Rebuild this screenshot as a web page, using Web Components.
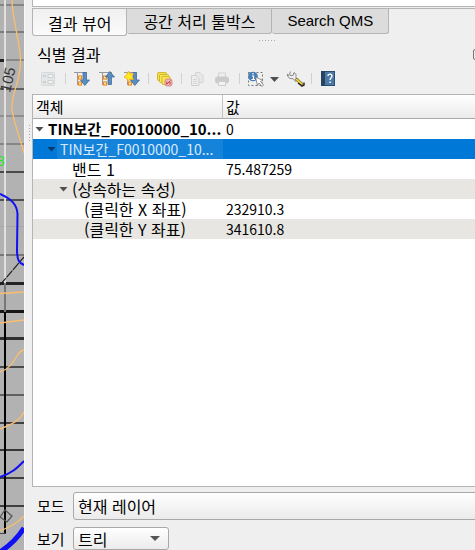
<!DOCTYPE html>
<html lang="ko">
<head>
<meta charset="utf-8">
<meta name="viewport" content="width=device-width, initial-scale=1">
<title>식별 결과</title>
<style>
    html, body {
        margin: 0;
        height: 100%;
    }
    body {
        font-family: "Noto Sans CJK KR", sans-serif;
        font-size: 16px;
        line-height: 20px;
        color: #000;
        background: #efefef;
        overflow: hidden;
    }
</style>
</head>
<body>
<gis-window>
    <map-strip slot="map"></map-strip>
    <dock-tabs slot="dock">
        <dock-tab active>결과 뷰어</dock-tab>
        <dock-tab>공간 처리 툴박스</dock-tab>
        <dock-tab latin>Search QMS</dock-tab>
    </dock-tabs>
    <identify-panel slot="dock" heading="식별 결과">
        <identify-toolbar slot="toolbar"></identify-toolbar>
        <result-tree></result-tree>
        <combo-row slot="footer" label="모드" options="현재 레이어" wide></combo-row>
        <combo-row slot="footer" label="보기" options="트리,테이블,그래프"></combo-row>
    </identify-panel>
</gis-window>

<script>
// --- Base: puts markup and styles in an open shadow root ---
class BaseElement extends HTMLElement {
    constructor() {
        super();
        this.attachShadow({ mode: "open" });
    }

    connectedCallback() {
        this.shadowRoot.innerHTML = `<style>${this.styles()}</style>${this.markup()}`;
    }
}

// --- Window: map, splitter, dock ---
class GisWindow extends BaseElement {
    styles() {
        return `
            :host {
                display: grid;
                grid-template-columns: 24px 8px minmax(0, 1fr);
                height: 100vh;
            }
            .splitter {
                display: flex;
                flex-direction: column;
                padding-top: 125px;
                padding-left: 4px;
                border-left: 1px solid #f8f8f8;
                box-sizing: border-box;
                background: #efefef;
            }
            .grip {
                width: 1px;
                height: 16px;
                background: repeating-linear-gradient(#aaa 0 1px, transparent 1px 3px);
            }
            .dock {
                display: flex;
                flex-direction: column;
                min-width: 0;
                overflow: hidden;
            }
        `;
    }

    markup() {
        return `
            <slot name="map"></slot>
            <div class="splitter"><div class="grip"></div></div>
            <div class="dock"><slot name="dock"></slot></div>
        `;
    }
}

// --- Map canvas visible left of the dock ---
class MapStrip extends BaseElement {
    styles() {
        return `
            :host { display: block; overflow: hidden; background: #b2b2b2; }
            svg { display: block; }
            text { font-family: "Liberation Sans", sans-serif; }
        `;
    }

    markup() {
        // [y, colour, thickness]
        const lines = [
            [5, "#858585", 2], [32, "#7d7d7d", 2], [60, "#888", 2], [89, "#606060", 2],
            [116, "#909090", 2], [144, "#858585", 2], [172, "#4a4a4a", 2], [200, "#505050", 2],
            [227, "#a5a5a5", 1], [255, "#777", 2], [283, "#242424", 3], [311, "#161616", 3],
            [338, "#303030", 3], [367, "#4a4a4a", 2], [395, "#606060", 2], [423, "#404040", 2],
            [450, "#383838", 2], [478, "#404040", 2], [506, "#404040", 2],
        ];
        const rects = lines
            .map(([y, c, h]) => `<rect x="0" y="${y - 1}" width="24" height="${h}" fill="${c}"/>`)
            .join("");
        return `
            <svg width="24" height="550" viewBox="0 0 24 550" aria-hidden="true">
                ${rects}
                <rect x="0" y="59" width="4" height="3" fill="#222"/>
                <rect x="4" y="0" width="2" height="283" fill="#e0e0e0"/>
                <rect x="4" y="283" width="2" height="29" fill="#777"/>
                <rect x="4" y="312" width="2" height="222" fill="#000"/>
                <rect x="0" y="533" width="6" height="1" fill="#444"/>
                <g fill="none" stroke="#fbbd6e" stroke-width="1.3">
                    <path d="M12 0C13 25 20 40 20.500 60C21 82 11 92 12 109C13 120 20 138 24 153"/>
                    <path d="M0 293.500L24 292M0 323L24 320"/>
                    <path d="M0 372C16 367 15 351 24 350"/>
                    <path d="M0 429C13 424 20 420 24 412"/>
                    <path d="M0 531C11 526 18 523 24 516"/>
                </g>
                <path d="M0 285L24 257" stroke="#222" stroke-width="1.200" stroke-dasharray="9 1"/>
                <g fill="none" stroke="#1010f5" stroke-width="2">
                    <path d="M0 194C11 199 17 204 17.500 214L17 250C17 262 20 263 24 265"/>
                    <path d="M0 477C12 473 16 469 24 461"/>
                    <path d="M0 552C9 546 17 539 24 528" stroke-width="5"/>
                </g>
                <path d="M5 510L12 516L7 522L0 517Z" fill="none" stroke="#555" stroke-width="1.200"/>
                <text transform="translate(10 93) rotate(-77)" font-size="15" fill="#333">105</text>
                <text x="-3" y="166" font-size="14" fill="#22e822">8</text>
            </svg>
        `;
    }
}

// --- Tabs ---
class DockTabs extends BaseElement {
    styles() {
        return `
            :host { display: block; flex: none; }
            .pane {
                height: 6px;
                background: #fff;
                border-left: 1px solid #b4b4b4;
                border-bottom: 1px solid #b4b4b4;
            }
            .bar {
                display: flex;
                align-items: flex-start;
                margin-top: 1px;
                height: 28px;
                border-top: 1px solid #b4b4b4;
                box-sizing: border-box;
            }
            .grip {
                width: 17px;
                height: 1px;
                margin: 4px auto 0;
                background: repeating-linear-gradient(90deg, #aaa 0 1px, transparent 1px 3px);
                transform: translateX(14px);
            }
        `;
    }

    markup() {
        return `
            <div class="pane"></div>
            <div class="bar" role="tablist"><slot></slot></div>
            <div class="grip"></div>
        `;
    }
}

class DockTab extends BaseElement {
    connectedCallback() {
        super.connectedCallback();
        this.shadowRoot.querySelector("button").addEventListener("click", () => {
            for (const tab of this.parentElement.children) {
                tab.toggleAttribute("active", tab === this);
            }
        });
    }

    styles() {
        return `
            :host { display: block; }
            button {
                height: 25px;
                padding: 0 16px;
                border: 1px solid #b4b4b4;
                border-width: 0 1px 1px 0;
                border-radius: 0 0 3px 3px;
                background: #dcdcdc;
                font: inherit;
                color: inherit;
                line-height: 24px;
                white-space: nowrap;
            }
            :host([active]) button {
                height: 27px;
                padding: 0 15px;
                border-left-width: 1px;
                background: linear-gradient(#f0f0f0, #fbfbfb);
                line-height: 28px;
            }
            :host([latin]) button {
                padding: 0 15px;
                font-family: "Liberation Sans", sans-serif;
                font-size: 15px;
            }
        `;
    }

    markup() {
        return `<button type="button" role="tab" aria-selected="${this.hasAttribute("active")}"><slot></slot></button>`;
    }
}

// --- Panel with title, toolbar, content and footer ---
class IdentifyPanel extends BaseElement {
    styles() {
        return `
            :host {
                display: flex;
                flex: 1;
                flex-direction: column;
                min-height: 0;
            }
            header {
                display: flex;
                align-items: center;
                justify-content: space-between;
                height: 22px;
                padding: 2px 0 0 5px;
                margin-right: -8px;
            }
            h1 { margin: 0; font-size: 16px; font-weight: normal; }
            header button {
                width: 10px;
                height: 11px;
                padding: 0;
                border: 1px solid #777;
                border-radius: 2px;
                background: #efefef;
            }
            footer {
                display: flex;
                flex-direction: column;
                gap: 7px;
                padding: 5px 0 0 5px;
            }
            ::slotted(result-tree) { flex: 1; min-height: 0; }
        `;
    }

    markup() {
        return `
            <header>
                <h1>${this.getAttribute("heading")}</h1>
                <button type="button" aria-label="분리"></button>
            </header>
            <slot name="toolbar"></slot>
            <slot></slot>
            <footer><slot name="footer"></slot></footer>
        `;
    }
}

// --- Toolbar ---
const TREE_LINES = `
    <path d="M0 1.500H13M3.500 2V14M3.500 6.500H5M3.500 13H5" fill="none" stroke="#999"/>
    <rect x="4.500" y="5" width="3" height="3" fill="#fff3d0" stroke="#ef8b1d" stroke-width="1.200"/>
    <rect x="4.500" y="11" width="3" height="3" fill="#fff3d0" stroke="#ef8b1d" stroke-width="1.200"/>`;
const ARROW_DOWN = `<path d="M9 1.500H12.500V9H15.500L10.800 14.500L6.500 9H9Z" fill="#5b8cbe" stroke="#3f6e9e" stroke-width="0.800"/>`;

const ICONS = {
    form: `
        <rect x="0.500" y="1.500" width="13" height="13" rx="1" fill="#e4e6e7" stroke="#d6d9da"/>
        <path d="M2 5H5M2 11H5" stroke="#ccd0d2" stroke-width="2"/>
        <path d="M7 3.500H12V6.500H7ZM7 9.500H12V12.500H7Z" fill="#f3f3f3" stroke="#ccd0d2"/>`,
    expand: TREE_LINES + ARROW_DOWN,
    collapse: TREE_LINES + `<path d="M9 13.500H12.500V6H15.500L10.800 0.500L6.500 6H9Z" fill="#5b8cbe" stroke="#3f6e9e" stroke-width="0.800"/>`,
    expandNew: TREE_LINES + ARROW_DOWN + `
        <path d="M4.500 0L6 3L9.500 2.500L8 5.500L9.500 8.500L6 8L4 10.500L3 7.500L0 6L2.500 4Z" fill="#ffea1f" stroke="#f5a913" stroke-width="0.800"/>`,
    clear: `
        <rect x="0.500" y="1.500" width="9" height="8" rx="1" fill="#f5df46" stroke="#c8ad24" stroke-width="0.800"/>
        <rect x="2.500" y="3.500" width="9" height="8" rx="1" fill="#f8e452" stroke="#c8ad24" stroke-width="0.800"/>
        <rect x="5" y="5.500" width="8" height="8" rx="1" fill="#f9e65b" stroke="#c8ad24" stroke-width="0.800"/>
        <rect x="8" y="8" width="7" height="7" rx="2" fill="#eebbbb" stroke="#d87575" stroke-width="0.800"/>
        <path d="M9.500 13.500L13.500 9.500M9.800 10.500V13M13 11V13.500" stroke="#c63c3c"/>`,
    copy: `
        <path d="M5.500 1.500H10L13 4.500V11.500H5.500Z" fill="#e8e8e8" stroke="#d4d4d4"/>
        <path d="M1.500 4.500H6L9 7.500V14.500H1.500Z" fill="#ececec" stroke="#d0d0d0"/>
        <path d="M3 8.500H7M3 10.500H7M3 12.500H7" stroke="#d8d8d8"/>`,
    print: `
        <rect x="3.500" y="2" width="7" height="5" fill="#eeeeee" stroke="#d4d4d4"/>
        <rect x="0.500" y="6" width="13" height="6" rx="2" fill="#cbcbcb" stroke="#cbcbcb"/>
        <rect x="3.500" y="10.500" width="7" height="4" fill="#f1f1f1" stroke="#cfcfcf"/>`,
    identify: `
        <rect x="0.500" y="1.500" width="14" height="13" fill="none" stroke="#777" stroke-dasharray="2 2"/>
        <circle cx="5" cy="5.500" r="4.800" fill="#477fb9"/>
        <path d="M5 2V3.500M4 5H5.500V8M3.500 8.500H7" fill="none" stroke="#fff" stroke-width="1.200"/>
        <path d="M7.500 6L15 9.500L12.500 10.500L15.500 14L14 15.500L11 12L9.500 14.500Z" fill="#fff" stroke="#777" stroke-width="0.800"/>
        <path d="M22 6H31L26.500 11Z" fill="#505050"/>`,
    settings: `
        <path d="M3.500 0.500L2.500 3L4 5L6.500 4L7 1.500C9.500 3 9.500 5 8.500 6L11 8.500L8.500 10.500L6 7.500C3 8.500 0 6 0.500 3L2 5" fill="#f0f0f0" stroke="#777" stroke-width="0.900"/>
        <path d="M8 8.500L10 7L16 12.500L14.500 14.500Z" fill="#e7cb42" stroke="#746824" stroke-width="0.800"/>
        <path d="M11 12L15 15L17 14L17 11.500" fill="none" stroke="#2c2c20" stroke-width="1.500"/>`,
    help: `
        <rect x="1.500" y="0.500" width="13" height="14" fill="#4b7aa8" stroke="#2b4f73"/>
        <rect x="1" y="0" width="4" height="15" fill="#28445f"/>
        <path d="M8 5C8 2.500 12 2.500 12 5C12 6.500 10 7 10 9" fill="none" stroke="#fff" stroke-width="1.300"/>
        <rect x="9.300" y="10.500" width="1.500" height="1.500" fill="#fff"/>`,
};

class IdentifyToolbar extends BaseElement {
    styles() {
        return `
            :host {
                display: flex;
                flex: none;
                align-items: center;
                gap: 9px;
                height: 29px;
                padding-left: 9px;
                box-sizing: border-box;
                padding-bottom: 2px;
            }
            button {
                width: 16px;
                height: 16px;
                padding: 0;
                border: 0;
                background: none;
            }
            button.menu { width: 30px; }
            svg { display: block; overflow: visible; }
            .sep {
                width: 1px;
                height: 11px;
                margin: 0 -1px;
                background: #d0d0d0;
            }
        `;
    }

    button(icon, label, extra = "") {
        return `<button type="button" aria-label="${label}" ${extra}>
            <svg width="16" height="16" viewBox="0 0 16 16">${ICONS[icon]}</svg>
        </button>`;
    }

    markup() {
        const sep = `<span class="sep"></span>`;
        return [
            this.button("form", "양식 보기", "disabled"),
            sep,
            this.button("expand", "트리 펼치기"),
            this.button("collapse", "트리 접기"),
            this.button("expandNew", "새 결과 펼치기"),
            sep,
            this.button("clear", "결과 지우기"),
            sep,
            this.button("copy", "복사", "disabled"),
            this.button("print", "인쇄", "disabled"),
            sep,
            this.button("identify", "객체 식별", 'class="menu"'),
            this.button("settings", "설정"),
            sep,
            this.button("help", "도움말"),
        ].join("");
    }
}

// --- Result tree ---
class ResultTree extends BaseElement {
    rows() {
        return [
            { level: 0, name: "TIN보간_F0010000_10...", value: "0", open: true, cls: "layer" },
            { level: 1, name: "TIN보간_F0010000_10...", value: "", open: true, cls: "selected" },
            { level: 2, name: "밴드 1", value: "75.487259" },
            { level: 2, name: "(상속하는 속성)", value: "", open: true },
            { level: 3, name: "(클릭한 X 좌표)", value: "232910.3" },
            { level: 3, name: "(클릭한 Y 좌표)", value: "341610.8" },
        ];
    }

    styles() {
        return `
            :host {
                display: block;
                overflow: hidden;
                background: #fff;
                border: 1px solid #b4b4b4;
                border-right: 0;
            }
            table {
                width: 100%;
                border-collapse: separate;
                border-spacing: 0;
                table-layout: fixed;
            }
            th, td {
                padding: 0 3px;
                text-align: left;
                font-weight: normal;
                white-space: nowrap;
            }
            th {
                height: 23px;
                font-size: 15px;
                background: linear-gradient(#fff, #ebebeb);
                border-bottom: 1px solid #aaa;
            }
            th:first-child {
                width: 183px;
                border-right: 1px solid #c4c4c4;
            }
            td { height: 20px; }
            td:first-child { padding: 0; }
            td:last-child { font-size: 14px; }
            .name {
                display: flex;
                align-items: center;
                padding-left: calc(var(--level) * 12px + 2px);
            }
            .name i {
                flex: none;
                width: 9px;
                height: 5px;
                margin-right: 4px;
            }
            .name i.open {
                background: #505050;
                clip-path: polygon(0 0, 100% 0, 50% 100%);
            }
            tr:nth-child(even) td { background: #e7e6e2; }
            .selected .name { font-size: 14px; }
            .layer .name { font-size: 15px; font-weight: bold; }
            tr.selected td { background: #0078d7; color: #d8eafa; }
            tr.selected td:first-child { background: linear-gradient(90deg, #0078d7 24px, #1683da 24px); }
            .selected .name i.open { background: #083a66; }
        `;
    }

    markup() {
        const body = this.rows()
            .map((r) => `
                <tr class="${r.cls || ""}">
                    <td><div class="name" style="--level: ${r.level}"><i class="${r.open ? "open" : ""}"></i>${r.name}</div></td>
                    <td>${r.value}</td>
                </tr>`)
            .join("");
        return `
            <table>
                <thead><tr><th scope="col">객체</th><th scope="col">값</th></tr></thead>
                <tbody>${body}</tbody>
            </table>
        `;
    }
}

// --- Label with drop-down ---
class ComboRow extends BaseElement {
    styles() {
        return `
            :host { display: flex; align-items: center; }
            label { flex: none; width: 36px; font-size: 15px; }
            .box { display: flex; position: relative; }
            select {
                appearance: none;
                width: 96px;
                height: 23px;
                padding: 0 4px;
                border: 1px solid #a8a8a8;
                border-radius: 3px;
                background: linear-gradient(#fff, #ebebeb);
                font: inherit;
                line-height: 20px;
                color: inherit;
            }
            svg { position: absolute; right: 9px; top: 9px; pointer-events: none; }
            :host([wide]) .box { flex: 1; margin-right: -24px; }
            :host([wide]) select { width: 100%; height: 28px; }
            :host([wide]) svg { top: 12px; }
        `;
    }

    markup() {
        const options = this.getAttribute("options")
            .split(",")
            .map((o) => `<option>${o}</option>`)
            .join("");
        return `
            <label for="combo">${this.getAttribute("label")}</label>
            <div class="box">
                <select id="combo">${options}</select>
                <svg width="10" height="5" viewBox="0 0 10 5"><path d="M0 0H10L5 5Z" fill="#555"/></svg>
            </div>
        `;
    }
}

customElements.define("gis-window", GisWindow);
customElements.define("map-strip", MapStrip);
customElements.define("dock-tabs", DockTabs);
customElements.define("dock-tab", DockTab);
customElements.define("identify-panel", IdentifyPanel);
customElements.define("identify-toolbar", IdentifyToolbar);
customElements.define("result-tree", ResultTree);
customElements.define("combo-row", ComboRow);
</script>
</body>
</html>
